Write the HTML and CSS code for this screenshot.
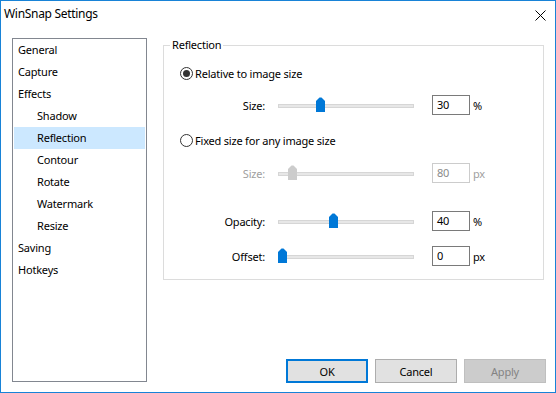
FILE: index.html
```html
<!DOCTYPE html>
<html>
<head>
<meta charset="utf-8">
<title>WinSnap Settings</title>
<link rel="stylesheet" href="styles.css">
</head>
<body>
<div class="window">
  <div class="titlebar">
    <span class="title">WinSnap Settings</span>
    <svg class="close" width="11" height="11" viewBox="0 0 11 11"><path d="M0.5 0.5 L10.5 10.5 M10.5 0.5 L0.5 10.5" stroke="#000" stroke-width="1" fill="none"/></svg>
  </div>
  <div class="main">
    <ul class="nav">
      <li class="nav-item">General</li>
      <li class="nav-item">Capture</li>
      <li class="nav-item">Effects</li>
      <li class="nav-item sub">Shadow</li>
      <li class="nav-item sub selected">Reflection</li>
      <li class="nav-item sub">Contour</li>
      <li class="nav-item sub">Rotate</li>
      <li class="nav-item sub">Watermark</li>
      <li class="nav-item sub">Resize</li>
      <li class="nav-item">Saving</li>
      <li class="nav-item">Hotkeys</li>
    </ul>
    <div class="right">
      <fieldset class="group">
        <legend class="legend">Reflection</legend>
        <div class="radio-row first">
          <span class="radio checked"></span><span class="radio-label">Relative to image size</span>
        </div>
        <div class="slider-row r-size">
          <span class="s-label">Size:</span>
          <div class="slider">
            <div class="track"></div>
            <svg class="thumb" style="left:38px" width="9" height="15" viewBox="0 0 9 15"><path d="M0 4 L3.5 0.5 L5.5 0.5 L9 4 L9 15 L0 15 Z" fill="#0078d7"/></svg>
          </div>
          <span class="field">30</span>
          <span class="unit">%</span>
        </div>
        <div class="radio-row second">
          <span class="radio"></span><span class="radio-label">Fixed size for any image size</span>
        </div>
        <div class="slider-row r-fixed disabled">
          <span class="s-label">Size:</span>
          <div class="slider">
            <div class="track"></div>
            <svg class="thumb" style="left:10px" width="9" height="15" viewBox="0 0 9 15"><path d="M0 4 L3.5 0.5 L5.5 0.5 L9 4 L9 15 L0 15 Z" fill="#cccccc"/></svg>
          </div>
          <span class="field">80</span>
          <span class="unit">px</span>
        </div>
        <div class="slider-row r-opacity">
          <span class="s-label">Opacity:</span>
          <div class="slider">
            <div class="track"></div>
            <svg class="thumb" style="left:51px" width="9" height="15" viewBox="0 0 9 15"><path d="M0 4 L3.5 0.5 L5.5 0.5 L9 4 L9 15 L0 15 Z" fill="#0078d7"/></svg>
          </div>
          <span class="field">40</span>
          <span class="unit">%</span>
        </div>
        <div class="slider-row r-offset">
          <span class="s-label">Offset:</span>
          <div class="slider">
            <div class="track"></div>
            <svg class="thumb" style="left:0px" width="9" height="15" viewBox="0 0 9 15"><path d="M0 4 L3.5 0.5 L5.5 0.5 L9 4 L9 15 L0 15 Z" fill="#0078d7"/></svg>
          </div>
          <span class="field">0</span>
          <span class="unit">px</span>
        </div>
      </fieldset>
      <div class="buttons">
        <button class="btn default">OK</button>
        <button class="btn">Cancel</button>
        <button class="btn disabled-btn">Apply</button>
      </div>
    </div>
  </div>
</div>
</body>
</html>
```
FILE: styles.css
```css
* { box-sizing: border-box; }
html, body { margin: 0; padding: 0; background: #fff; }
body {
  font-family: "Segoe UI", "Noto Sans", "DejaVu Sans", sans-serif;
  font-size: 11px;
  letter-spacing: -0.2px;
  color: #000;
}
.window {
  width: 556px;
  height: 393px;
  border: 1px solid #1883d7;
  display: flex;
  flex-direction: column;
  background: #fff;
}
.titlebar {
  height: 29px;
  flex: none;
  display: flex;
  align-items: center;
  justify-content: space-between;
  padding: 0 9px 3px 3px;
}
.title { font-size: 12px; line-height: 16px; letter-spacing: -0.3px; }
.close { display: block; width: 11px; height: 11px; margin-top: 3px; }
.main {
  flex: 1;
  display: flex;
  padding: 8px 9px 9px 11px;
}
.nav {
  list-style: none;
  margin: 0 0 1px 0;
  padding: 0 1px;
  width: 135px;
  border: 1px solid #828790;
}
.nav-item {
  height: 22px;
  line-height: 22px;
  padding-left: 4px;
  white-space: nowrap;
}
.nav-item.sub { padding-left: 23px; }
.nav-item.selected { background: #cce8ff; }
.right {
  flex: 1;
  margin-left: 16px;
  display: flex;
  flex-direction: column;
}
.group {
  margin: -1px 2px 0 0;
  padding: 0;
  height: 243px;
  border: 1px solid #dcdcdc;
  min-width: 0;
}
.legend {
  margin-left: 6px;
  padding: 0 2px;
  line-height: 16px;
}
.radio-row {
  display: flex;
  align-items: center;
  height: 16px;
  padding-left: 16px;
}
.radio-row.first { margin-top: 12px; }
.radio-row.second { margin-top: 17px; }
.radio {
  width: 13px;
  height: 13px;
  border: 1px solid #333;
  border-radius: 50%;
  display: flex;
  align-items: center;
  justify-content: center;
  flex: none;
}
.radio.checked::after {
  content: "";
  width: 7px;
  height: 7px;
  border-radius: 50%;
  background: #333;
}
.radio-label { margin-left: 2px; }
.slider-row {
  display: flex;
  align-items: center;
  height: 20px;
}
.r-size { margin-top: 14px; }
.r-fixed { margin-top: 15px; }
.r-opacity { margin-top: 28px; }
.r-offset { margin-top: 15px; }
.s-label {
  width: 101px;
  text-align: right;
  flex: none;
}
.slider {
  position: relative;
  width: 136px;
  height: 20px;
  margin-left: 13px;
  flex: none;
}
.track {
  margin-top: 9px;
  height: 4px;
  background: #e7e7e7;
  border: 1px solid #d6d6d6;
}
.thumb { position: absolute; top: 2px; display: block; }
.field {
  margin-left: 18px;
  width: 38px;
  height: 20px;
  border: 1px solid #7a7a7a;
  padding-left: 4px;
  line-height: 18px;
  flex: none;
}
.unit { margin-left: 3px; }
.disabled .s-label,
.disabled .unit { color: #a0a0a0; }
.disabled .field { border-color: #cccccc; color: #8a8a8a; }
.buttons {
  margin-top: auto;
  display: flex;
  justify-content: flex-end;
  gap: 7px;
}
.btn {
  width: 82px;
  height: 24px;
  font-family: inherit;
  font-size: 11px;
  letter-spacing: -0.2px;
  color: #000;
  background: #e1e1e1;
  border: 1px solid #adadad;
  padding: 0;
}
.btn.default { border: 2px solid #0078d7; }
.btn.disabled-btn { background: #cccccc; border-color: #bfbfbf; color: #838383; }
```
